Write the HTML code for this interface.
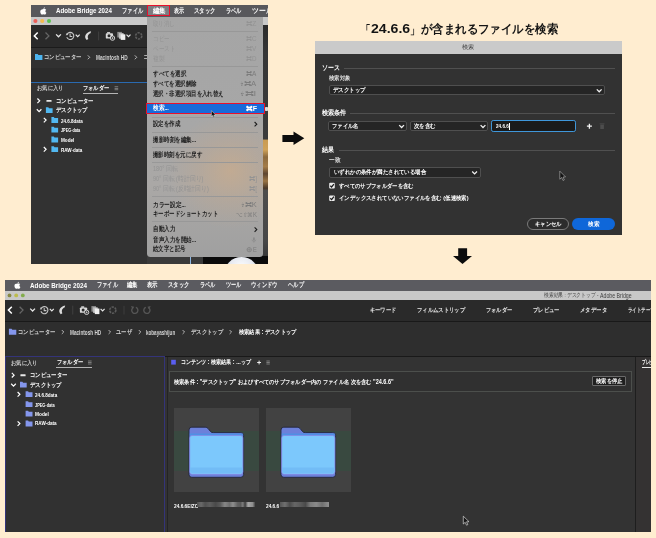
<!DOCTYPE html>
<html lang="ja">
<head>
<meta charset="utf-8">
<title>Adobe Bridge 検索</title>
<style>
html,body{margin:0;padding:0;overflow:hidden}
body{width:656px;height:538px;background:#ffedd0;position:relative;overflow:hidden;font-family:"Liberation Sans",sans-serif;}
.a{position:absolute}
.t{position:absolute;white-space:nowrap;transform-origin:0 50%}
.clip{position:absolute;left:0;top:0;width:656px;height:538px;overflow:hidden}
#p1{clip-path:inset(5px 388px 274px 31px)}
#dlg{clip-path:inset(41px 34px 303px 315px)}
#p3{clip-path:inset(280px 5px 6px 5px)}
svg{position:absolute;left:0;top:0;overflow:visible}
</style>
</head>
<body>
<!-- heading -->
<div class="t" style="left:360.8px;top:29.2px;font-size:11.6px;line-height:15.08px;height:15.08px;margin-top:-7.54px;color:#141414;font-weight:bold;transform:scaleX(0.792);">「</div><div class="t" style="left:371px;top:28.7px;font-size:12.4px;line-height:16.12px;height:16.12px;margin-top:-8.06px;color:#141414;font-weight:bold;transform:scaleX(1.138);">24.6.6</div><div class="t" style="left:410px;top:29.2px;font-size:11.6px;line-height:15.08px;height:15.08px;margin-top:-7.54px;color:#141414;font-weight:bold;transform:scaleX(0.800);">」</div><div class="t" style="left:421px;top:29.2px;font-size:11.8px;line-height:15.34px;height:15.34px;margin-top:-7.67px;color:#141414;font-weight:bold;transform:scaleX(0.951);">が含まれるファイルを検索</div>
<svg width="656" height="538" viewBox="0 0 656 538">
  <path d="M282.4 134.9H293.5V131.6L304.3 138.3L293.5 145V141.9H282.4Z" fill="#0c0c0c"/>
  <path d="M458.2 248.2H467.1V256H472L462.5 264L453 256H458.2Z" fill="#0c0c0c"/>
</svg>
<!-- PANEL 1 : Bridge window with 編集 menu open -->
<div class="clip" id="p1">

  <div class="a" style="left:31px;top:5px;width:237px;height:12px;background:#58585c"></div>
  <div class="a" style="left:31px;top:16.6px;width:237px;height:8.8px;background:#c9c9c9"></div>
  <div class="a" style="left:31px;top:25.2px;width:237px;height:22px;background:#2a2a2a"></div>
  <div class="a" style="left:31px;top:46.6px;width:237px;height:22px;background:#313131;border-top:1px solid #1b1b1b;box-sizing:border-box"></div>
  <div class="a" style="left:31px;top:68px;width:237px;height:15px;background:#2c2c2c"></div>
  <div class="a" style="left:31px;top:83px;width:237px;height:181px;background:#323232"></div>
  <div class="a" style="left:31px;top:82.3px;width:237px;height:1px;background:#2a6ab0"></div>
  <!-- photo sliver right of the menu -->
  <div class="a" style="left:262px;top:25px;width:6px;height:240px;background:linear-gradient(180deg,#2b2b2b 0,#363636 12%,#3b3b3b 47.4%,#c99b52 48.1%,#cfa259 52%,#8c6a3e 55%,#a47c48 59%,#5e4630 62%,#9a7444 65%,#4a3828 68%,#4c4c4c 69%,#474747 90%,#3a3a3a 96%,#0b0b0b 96.8%)"></div>
  <div class="a" style="left:265.4px;top:106.6px;width:3px;height:4.2px;border-radius:0.8px;background:#d9d9d9"></div>
  <div class="a" style="left:147px;top:256px;width:56px;height:8px;background:#3a3a3a"></div>
  <div class="a" style="left:190px;top:256px;width:0.9px;height:8px;background:#8db6e2"></div>
  <div class="a" style="left:203px;top:256px;width:65px;height:8px;background:#0b0b0b"></div>
  <div class="a" style="left:224px;top:257.2px;width:35px;height:35px;border-radius:50%;background:radial-gradient(circle at 50% 30%,#fbfcfe 0,#e6e9f0 40%,#c2c8d6 70%,#8a92a4 100%)"></div>

  <div class="t" style="left:55.9px;top:11.7px;font-size:6.9px;line-height:8.97px;height:8.97px;margin-top:-4.485px;color:#fff;font-weight:bold;transform:scaleX(0.896);">Adobe Bridge 2024</div>
  <div class="t" style="left:122.4px;top:10.8px;font-size:6.6px;line-height:8.58px;height:8.58px;margin-top:-4.29px;color:#fff;font-weight:bold;transform:scaleX(0.750);">ファイル</div>
  <div class="a" style="left:147.4px;top:4.9px;width:22.4px;height:11.5px;box-sizing:border-box;border:1.1px solid #e8102c;background:#7c7c80"></div>
  <div class="t" style="left:152.6px;top:10.8px;font-size:6.6px;line-height:8.58px;height:8.58px;margin-top:-4.29px;color:#fff;font-weight:bold;transform:scaleX(0.914);">編集</div>
  <div class="t" style="left:174.2px;top:10.8px;font-size:6.6px;line-height:8.58px;height:8.58px;margin-top:-4.29px;color:#fff;font-weight:bold;transform:scaleX(0.721);">表示</div>
  <div class="t" style="left:193.8px;top:10.8px;font-size:6.6px;line-height:8.58px;height:8.58px;margin-top:-4.29px;color:#fff;font-weight:bold;transform:scaleX(0.768);">スタック</div>
  <div class="t" style="left:226px;top:10.8px;font-size:6.6px;line-height:8.58px;height:8.58px;margin-top:-4.29px;color:#fff;font-weight:bold;transform:scaleX(0.743);">ラベル</div>
  <div class="t" style="left:251.5px;top:10.8px;font-size:6.6px;line-height:8.58px;height:8.58px;margin-top:-4.29px;color:#fff;font-weight:bold;transform:scaleX(0.976);">ツール</div>
  <div class="t" style="left:44.4px;top:57.3px;font-size:6.4px;line-height:8.32px;height:8.32px;margin-top:-4.16px;color:#d2d2d2;font-weight:bold;transform:scaleX(0.895);">コンピューター</div>
  <div class="t" style="left:96.4px;top:58.2px;font-size:6.3px;line-height:8.19px;height:8.19px;margin-top:-4.095px;color:#d2d2d2;font-weight:bold;transform:scaleX(0.753);">Macintosh HD</div>
  <div class="t" style="left:143px;top:57.3px;font-size:6.4px;line-height:8.32px;height:8.32px;margin-top:-4.16px;color:#d2d2d2;font-weight:bold;transform:scaleX(1.417);">コン</div>
  <div class="t" style="left:37px;top:88.4px;font-size:6.2px;line-height:8.06px;height:8.06px;margin-top:-4.03px;color:#cdcdcd;font-weight:bold;transform:scaleX(0.880);">お気に入り</div>
  <div class="t" style="left:83.4px;top:88.4px;font-size:6.4px;line-height:8.32px;height:8.32px;margin-top:-4.16px;color:#ffffff;font-weight:bold;transform:scaleX(0.873);">フォルダー</div>
  <div class="a" style="left:82.8px;top:92.7px;width:35px;height:0.9px;background:#b4b4b4"></div>
  <div class="t" style="left:55.6px;top:100.8px;font-size:6.4px;line-height:8.32px;height:8.32px;margin-top:-4.16px;color:#fff;font-weight:bold;transform:scaleX(0.898);">コンピューター</div>
  <div class="t" style="left:55.6px;top:110.2px;font-size:6.4px;line-height:8.32px;height:8.32px;margin-top:-4.16px;color:#fff;font-weight:bold;transform:scaleX(0.881);">デスクトップ</div>
  <div class="t" style="left:61px;top:121px;font-size:6.1px;line-height:7.93px;height:7.93px;margin-top:-3.965px;color:#fff;font-weight:bold;transform:scaleX(0.736);">24.6.8data</div>
  <div class="t" style="left:61px;top:130.1px;font-size:6.1px;line-height:7.93px;height:7.93px;margin-top:-3.965px;color:#fff;font-weight:bold;transform:scaleX(0.623);">JPEG-data</div>
  <div class="t" style="left:61px;top:139.9px;font-size:6.1px;line-height:7.93px;height:7.93px;margin-top:-3.965px;color:#fff;font-weight:bold;transform:scaleX(0.761);">Model</div>
  <div class="t" style="left:61px;top:150.2px;font-size:6.1px;line-height:7.93px;height:7.93px;margin-top:-3.965px;color:#fff;font-weight:bold;transform:scaleX(0.747);">RAW-data</div>
  <svg width="656" height="538" viewBox="0 0 656 538">
<g transform="translate(43.4 10.9) scale(0.95)" fill="#fff"><path d="M0.2 -1.9C-0.6 -1.9 -1.0 -1.5 -1.6 -1.5C-2.6 -1.5 -3.3 -0.5 -3.3 0.8C-3.3 2.2 -2.3 3.9 -1.4 3.9C-0.9 3.9 -0.6 3.6 0 3.6C0.6 3.6 0.8 3.9 1.4 3.9C2.2 3.9 2.9 2.7 3.2 1.9C2.4 1.6 2.1 0.9 2.1 0.3C2.1 -0.4 2.5 -0.9 3.0 -1.2C2.6 -1.7 2.0 -1.9 1.5 -1.9C0.9 -1.9 0.6 -1.9 0.2 -1.9Z"/><path d="M0.1 -2.1C0.1 -3.0 0.8 -3.7 1.6 -3.8C1.7 -2.9 0.9 -2.1 0.1 -2.1Z"/></g>
<circle cx="35.4" cy="21" r="2.05" fill="#ec5f58"/>
<circle cx="42.2" cy="21" r="2.05" fill="#f4bc4e"/>
<circle cx="49" cy="21" r="2.05" fill="#5cc351"/>
<path d="M37.7 32.5L34.3 35.9L37.7 39.3" fill="none" stroke="#fff" stroke-width="1.5"/><path d="M45.5 32.5L48.9 35.9L45.5 39.3" fill="none" stroke="#666666" stroke-width="1.3"/><path d="M56.1 34.4L58.5 36.8L60.9 34.4" fill="none" stroke="#e6e6e6" stroke-width="1.3"/><path d="M67.1 34.1A3.6 3.6 0 1 1 66.8 37.1" fill="none" stroke="#c4c4c4" stroke-width="1.15"/><path d="M65.7 35.3l1.1 -2.4l1.5 2.2z" fill="#c4c4c4"/><path d="M70.1 33.5V36.4H72.3" fill="none" stroke="#c4c4c4" stroke-width="1.05"/><path d="M75.7 34.6L77.7 36.6L79.7 34.6" fill="none" stroke="#e6e6e6" stroke-width="1.2"/><path d="M91.1 31.3C85.5 32.5 83.5 37.1 86.7 40.1L88.3 39.1C87.1 36.5 88.1 34.1 90.5 33.3Z" fill="#dcdcdc"/><rect x="98.3" y="31.5" width="0.8" height="8.8" fill="#474747"/><rect x="105.8" y="33.2" width="7.2" height="5.4" rx="0.9" fill="#d8d8d8"/><rect x="107.1" y="32.1" width="3" height="1.5" fill="#d8d8d8"/><circle cx="109" cy="35.8" r="1.5" fill="#2a2a2a"/><circle cx="112.5" cy="38.1" r="2.2" fill="#2a2a2a" stroke="#d8d8d8" stroke-width="0.95"/><path d="M112.5 37.1v2M111.5 38.1h2" stroke="#d8d8d8" stroke-width="0.7"/><rect x="117.3" y="31.9" width="4.6" height="5.6" fill="#8e8e8e"/><rect x="119" y="33.1" width="4.6" height="5.6" fill="#c0c0c0"/><rect x="120.7" y="34.3" width="4.6" height="5.6" fill="#f0f0f0"/><path d="M126.5 34.6L128.5 36.6L130.5 34.6" fill="none" stroke="#e6e6e6" stroke-width="1.2"/><circle cx="138.7" cy="35.9" r="3.1" fill="none" stroke="#5c5c5c" stroke-width="1.6" stroke-dasharray="2.3 0.95"/>
<path d="M35 54.1h2.664l0.74 0.96h3.996v5.04h-7.4z" fill="#4db4ee"/>
<path d="M87.8 55.35L89.75 57.3L87.8 59.25" fill="none" stroke="#bebebe" stroke-width="0.95"/>
<path d="M134.8 55.35L136.75 57.3L134.8 59.25" fill="none" stroke="#bebebe" stroke-width="0.95"/>
<rect x="114.6" y="86.45" width="3.6" height="0.7" fill="#9a9a9a"/>
<rect x="114.6" y="87.95" width="3.6" height="0.7" fill="#9a9a9a"/>
<rect x="114.6" y="89.45" width="3.6" height="0.7" fill="#9a9a9a"/>
<path d="M37.4 98.5L39.7 100.8L37.4 103.1" fill="none" stroke="#fff" stroke-width="1.2"/>
<rect x="46.4" y="99.9" width="5.2" height="1.9" rx="0.5" fill="#e8e8e8"/>
<path d="M36.8 109.25L39.1 111.55L41.4 109.25" fill="none" stroke="#fff" stroke-width="1.2"/>
<path d="M45.9 107.2h2.412l0.67 0.928h3.618v4.872h-6.7z" fill="#52b8f0"/>
<path d="M43.8 117.8L46.1 120.1L43.8 122.4" fill="none" stroke="#fff" stroke-width="1.2"/>
<path d="M51.4 117.1h2.412l0.67 0.928h3.618v4.872h-6.7z" fill="#52b8f0"/>
<path d="M51.4 126.8h2.412l0.67 0.928h3.618v4.872h-6.7z" fill="#52b8f0"/>
<path d="M51.4 136.6h2.412l0.67 0.928h3.618v4.872h-6.7z" fill="#52b8f0"/>
<path d="M43.8 147L46.1 149.3L43.8 151.6" fill="none" stroke="#fff" stroke-width="1.2"/>
<path d="M51.4 146.3h2.412l0.67 0.928h3.618v4.872h-6.7z" fill="#52b8f0"/>
  </svg>
  <div class="a" style="left:147.4px;top:16.8px;width:115.5px;height:239.9px;border-radius:0 0 3.5px 3.5px;background:
     radial-gradient(ellipse 62px 58px at 72% 64%,rgba(208,172,134,.62) 0,rgba(196,168,140,.36) 50%,rgba(170,165,160,0) 100%),
     linear-gradient(180deg,#a5a5a5 0,#a7a7a7 45%,#aaa8a6 70%,#a0a0a0 100%)"></div>
  <div class="t" style="left:152.8px;top:24.3px;font-size:6.5px;line-height:8.45px;height:8.45px;margin-top:-4.225px;color:#939393;transform:scaleX(0.779);">取り消し</div>
  <div class="t" style="left:246.2px;top:24.3px;font-size:6.3px;line-height:8.19px;height:8.19px;margin-top:-4.095px;color:#939393;transform:scaleX(1.055);">⌘Z</div>
  <div class="a" style="left:152px;top:30.9px;width:106px;height:0.8px;background:#989898"></div>
  <div class="t" style="left:152.8px;top:38.8px;font-size:6.5px;line-height:8.45px;height:8.45px;margin-top:-4.225px;color:#939393;transform:scaleX(0.790);">コピー</div>
  <div class="t" style="left:246.2px;top:38.8px;font-size:6.3px;line-height:8.19px;height:8.19px;margin-top:-4.095px;color:#939393;transform:scaleX(0.985);">⌘C</div>
  <div class="t" style="left:152.8px;top:48.9px;font-size:6.5px;line-height:8.45px;height:8.45px;margin-top:-4.225px;color:#939393;transform:scaleX(0.786);">ペースト</div>
  <div class="t" style="left:246.2px;top:48.9px;font-size:6.3px;line-height:8.19px;height:8.19px;margin-top:-4.095px;color:#939393;transform:scaleX(1.019);">⌘V</div>
  <div class="t" style="left:152.8px;top:59.1px;font-size:6.5px;line-height:8.45px;height:8.45px;margin-top:-4.225px;color:#939393;transform:scaleX(0.843);">複製</div>
  <div class="t" style="left:246.2px;top:59.1px;font-size:6.3px;line-height:8.19px;height:8.19px;margin-top:-4.095px;color:#939393;transform:scaleX(0.985);">⌘D</div>
  <div class="a" style="left:152px;top:66px;width:106px;height:0.8px;background:#989898"></div>
  <div class="t" style="left:152.8px;top:74.2px;font-size:6.5px;line-height:8.45px;height:8.45px;margin-top:-4.225px;color:#1c1c1c;font-weight:bold;transform:scaleX(0.790);">すべてを選択</div>
  <div class="t" style="left:246.2px;top:74.2px;font-size:6.3px;line-height:8.19px;height:8.19px;margin-top:-4.095px;color:#7c7c7c;transform:scaleX(1.019);">⌘A</div>
  <div class="t" style="left:152.8px;top:84px;font-size:6.5px;line-height:8.45px;height:8.45px;margin-top:-4.225px;color:#1c1c1c;font-weight:bold;transform:scaleX(0.782);">すべてを選択解除</div>
  <div class="t" style="left:240.4px;top:84px;font-size:6.3px;line-height:8.19px;height:8.19px;margin-top:-4.095px;color:#7c7c7c;transform:scaleX(1.227);">⇧⌘A</div>
  <div class="t" style="left:152.8px;top:94px;font-size:6.5px;line-height:8.45px;height:8.45px;margin-top:-4.225px;color:#1c1c1c;font-weight:bold;transform:scaleX(0.778);">選択・非選択項目を入れ替え</div>
  <div class="t" style="left:240.4px;top:94px;font-size:6.3px;line-height:8.19px;height:8.19px;margin-top:-4.095px;color:#7c7c7c;transform:scaleX(1.507);">⇧⌘I</div>
  <div class="a" style="left:145.5px;top:103.4px;width:119.2px;height:10.6px;box-sizing:border-box;border:1.25px solid #e8102c;background:#176bda"></div>
  <div class="t" style="left:152.8px;top:108.7px;font-size:6.5px;line-height:8.45px;height:8.45px;margin-top:-4.225px;color:#fff;font-weight:bold;transform:scaleX(0.814);">検索...</div>
  <div class="t" style="left:246.4px;top:108.7px;font-size:6.4px;line-height:8.32px;height:8.32px;margin-top:-4.16px;color:#fff;font-weight:bold;transform:scaleX(1.110);">⌘F</div>
  <div class="a" style="left:152px;top:116.8px;width:106px;height:0.8px;background:#989898"></div>
  <div class="t" style="left:152.8px;top:124.2px;font-size:6.5px;line-height:8.45px;height:8.45px;margin-top:-4.225px;color:#1c1c1c;font-weight:bold;transform:scaleX(0.777);">設定を作成</div>
  <div class="a" style="left:152px;top:131.5px;width:106px;height:0.8px;background:#989898"></div>
  <div class="t" style="left:152.8px;top:139.8px;font-size:6.5px;line-height:8.45px;height:8.45px;margin-top:-4.225px;color:#1c1c1c;font-weight:bold;transform:scaleX(0.794);">撮影時刻を編集...</div>
  <div class="a" style="left:152px;top:146.5px;width:106px;height:0.8px;background:#989898"></div>
  <div class="t" style="left:152.8px;top:154.8px;font-size:6.5px;line-height:8.45px;height:8.45px;margin-top:-4.225px;color:#1c1c1c;font-weight:bold;transform:scaleX(0.781);">撮影時刻を元に戻す</div>
  <div class="a" style="left:152px;top:161.8px;width:106px;height:0.8px;background:#989898"></div>
  <div class="t" style="left:152.8px;top:169.6px;font-size:6.5px;line-height:8.45px;height:8.45px;margin-top:-4.225px;color:#939393;transform:scaleX(0.861);">180° 回転</div>
  <div class="t" style="left:152.8px;top:179.2px;font-size:6.5px;line-height:8.45px;height:8.45px;margin-top:-4.225px;color:#939393;transform:scaleX(0.840);">90° 回転 (時計回り)</div>
  <div class="t" style="left:248.5px;top:179.2px;font-size:6.3px;line-height:8.19px;height:8.19px;margin-top:-4.095px;color:#939393;transform:scaleX(1.045);">⌘]</div>
  <div class="t" style="left:152.8px;top:189.4px;font-size:6.5px;line-height:8.45px;height:8.45px;margin-top:-4.225px;color:#939393;transform:scaleX(0.836);">90° 回転 (反時計回り)</div>
  <div class="t" style="left:248.5px;top:189.4px;font-size:6.3px;line-height:8.19px;height:8.19px;margin-top:-4.095px;color:#939393;transform:scaleX(1.045);">⌘[</div>
  <div class="a" style="left:152px;top:196.4px;width:106px;height:0.8px;background:#989898"></div>
  <div class="t" style="left:152.8px;top:205px;font-size:6.5px;line-height:8.45px;height:8.45px;margin-top:-4.225px;color:#1c1c1c;font-weight:bold;transform:scaleX(0.811);">カラー設定...</div>
  <div class="t" style="left:241px;top:205px;font-size:6.3px;line-height:8.19px;height:8.19px;margin-top:-4.095px;color:#7c7c7c;transform:scaleX(1.182);">⇧⌘K</div>
  <div class="t" style="left:152.8px;top:214.6px;font-size:6.5px;line-height:8.45px;height:8.45px;margin-top:-4.225px;color:#1c1c1c;font-weight:bold;transform:scaleX(0.776);">キーボードショートカット</div>
  <div class="t" style="left:235.6px;top:214.6px;font-size:6.3px;line-height:8.19px;height:8.19px;margin-top:-4.095px;color:#7c7c7c;transform:scaleX(0.946);">⌥⇧⌘K</div>
  <div class="a" style="left:152px;top:221.4px;width:106px;height:0.8px;background:#989898"></div>
  <div class="t" style="left:152.8px;top:229.6px;font-size:6.5px;line-height:8.45px;height:8.45px;margin-top:-4.225px;color:#1c1c1c;font-weight:bold;transform:scaleX(0.793);">自動入力</div>
  <div class="t" style="left:152.8px;top:239.8px;font-size:6.5px;line-height:8.45px;height:8.45px;margin-top:-4.225px;color:#1c1c1c;font-weight:bold;transform:scaleX(0.794);">音声入力を開始...</div>
  <div class="t" style="left:152.8px;top:249.6px;font-size:6.5px;line-height:8.45px;height:8.45px;margin-top:-4.225px;color:#1c1c1c;font-weight:bold;transform:scaleX(0.776);">絵文字と記号</div>
  <div class="t" style="left:252.8px;top:250.5px;font-size:6.3px;line-height:8.19px;height:8.19px;margin-top:-4.095px;color:#7c7c7c;transform:scaleX(0.904);">E</div>
  <svg width="656" height="538" viewBox="0 0 656 538">
<path d="M254.6 122L256.8 124.2L254.6 126.4" fill="none" stroke="#1c1c1c" stroke-width="1.1"/>
<path d="M254.6 227.4L256.8 229.6L254.6 231.8" fill="none" stroke="#1c1c1c" stroke-width="1.1"/>
<rect x="253" y="237.2" width="1.8" height="3.4" rx="0.9" fill="#8a8a8a"/><path d="M252 239.6a1.9 1.9 0 0 0 3.8 0M253.9 241.5v1.2" fill="none" stroke="#8a8a8a" stroke-width="0.6"/>
<circle cx="249.2" cy="249.7" r="2.2" fill="none" stroke="#7c7c7c" stroke-width="0.7"/><path d="M247 249.7h4.4M249.2 247.5v4.4" stroke="#7c7c7c" stroke-width="0.5"/>
<path d="M211.4 110.6L211.4 116.6L212.8 115.4L213.8 117.7L214.8 117.3L213.8 115.1L215.8 115Z" fill="#111" stroke="#e8e8e8" stroke-width="0.45"/>
  </svg>
</div>
<!-- DIALOG : 検索 -->
<div class="clip" id="dlg">

  <div class="a" style="left:315px;top:41px;width:307px;height:13px;background:#cacaca"></div>
  <div class="a" style="left:315px;top:53.9px;width:307px;height:182px;background:#323232"></div>

  <div class="t" style="left:462.4px;top:47.7px;font-size:5.8px;line-height:7.54px;height:7.54px;margin-top:-3.77px;color:#3c3c3c;transform:scaleX(1.017);">検索</div>
  <div class="t" style="left:321.9px;top:68.1px;font-size:7.2px;line-height:9.36px;height:9.36px;margin-top:-4.68px;color:#fff;font-weight:bold;transform:scaleX(0.848);">ソース</div>
  <div class="a" style="left:343.6px;top:68.15px;width:271.8px;height:0.9px;background:#505050"></div>
  <div class="t" style="left:329.4px;top:78.6px;font-size:5.6px;line-height:7.28px;height:7.28px;margin-top:-3.64px;color:#e2e2e2;font-weight:bold;transform:scaleX(0.888);">検索対象</div>
  <div class="a" style="left:328.8px;top:85.3px;width:276.4px;height:10.2px;box-sizing:border-box;border:0.9px solid #4f4f4f;border-radius:2px;background:#252525"></div>
  <div class="t" style="left:333.4px;top:90.5px;font-size:6.2px;line-height:8.06px;height:8.06px;margin-top:-4.03px;color:#fff;font-weight:bold;transform:scaleX(0.903);">デスクトップ</div>
  <div class="t" style="left:321.9px;top:112.3px;font-size:7px;line-height:9.1px;height:9.1px;margin-top:-4.55px;color:#fff;font-weight:bold;transform:scaleX(0.875);">検索条件</div>
  <div class="a" style="left:350.4px;top:112.65px;width:265px;height:0.9px;background:#505050"></div>
  <div class="a" style="left:328.4px;top:121px;width:79px;height:10.2px;box-sizing:border-box;border:0.9px solid #4f4f4f;border-radius:2px;background:#252525"></div>
  <div class="t" style="left:332px;top:126.2px;font-size:6.2px;line-height:8.06px;height:8.06px;margin-top:-4.03px;color:#fff;font-weight:bold;transform:scaleX(0.880);">ファイル名</div>
  <div class="a" style="left:410.4px;top:121px;width:77.4px;height:10.2px;box-sizing:border-box;border:0.9px solid #4f4f4f;border-radius:2px;background:#252525"></div>
  <div class="t" style="left:413.8px;top:126.2px;font-size:6.2px;line-height:8.06px;height:8.06px;margin-top:-4.03px;color:#fff;font-weight:bold;transform:scaleX(0.900);">次を含む</div>
  <div class="a" style="left:490.6px;top:119.9px;width:85.2px;height:12.3px;box-sizing:border-box;border:1.3px solid #3f97da;border-radius:2.2px;background:#1a1a1a"></div>
  <div class="t" style="left:495.6px;top:127.1px;font-size:5.8px;line-height:7.54px;height:7.54px;margin-top:-3.77px;color:#fff;font-weight:bold;transform:scaleX(0.794);">24.6.6</div>
  <div class="a" style="left:508.9px;top:122.6px;width:0.9px;height:7px;background:#fff"></div>
  <div class="t" style="left:321.9px;top:150px;font-size:7px;line-height:9.1px;height:9.1px;margin-top:-4.55px;color:#fff;font-weight:bold;transform:scaleX(0.857);">結果</div>
  <div class="a" style="left:338.8px;top:149.85px;width:276.6px;height:0.9px;background:#505050"></div>
  <div class="t" style="left:329.4px;top:160.7px;font-size:5.6px;line-height:7.28px;height:7.28px;margin-top:-3.64px;color:#e2e2e2;font-weight:bold;transform:scaleX(0.933);">一致</div>
  <div class="a" style="left:328.8px;top:167.4px;width:152.6px;height:10.2px;box-sizing:border-box;border:0.9px solid #4f4f4f;border-radius:2px;background:#252525"></div>
  <div class="t" style="left:333.8px;top:171.9px;font-size:6.2px;line-height:8.06px;height:8.06px;margin-top:-4.03px;color:#fff;font-weight:bold;transform:scaleX(0.902);">いずれかの条件が満たされている場合</div>
  <div class="t" style="left:339.2px;top:185.7px;font-size:6.2px;line-height:8.06px;height:8.06px;margin-top:-4.03px;color:#fff;font-weight:bold;transform:scaleX(0.888);">すべてのサブフォルダーを含む</div>
  <div class="t" style="left:339.2px;top:198.3px;font-size:6.2px;line-height:8.06px;height:8.06px;margin-top:-4.03px;color:#fff;font-weight:bold;transform:scaleX(0.901);">インデックスされていないファイルを含む (低速検索)</div>
  <div class="a" style="left:527.4px;top:217.9px;width:41.5px;height:12.2px;box-sizing:border-box;border:1px solid #7a7a7a;border-radius:6.1px;background:#2c2c2c"></div>
  <div class="t" style="left:535px;top:224.1px;font-size:6.1px;line-height:7.93px;height:7.93px;margin-top:-3.965px;color:#fff;font-weight:bold;transform:scaleX(0.880);">キャンセル</div>
  <div class="a" style="left:572.4px;top:217.9px;width:42.8px;height:12.2px;border-radius:6.1px;background:#0f67d9"></div>
  <div class="t" style="left:588.2px;top:224.1px;font-size:6.1px;line-height:7.93px;height:7.93px;margin-top:-3.965px;color:#fff;font-weight:bold;transform:scaleX(0.933);">検索</div>
  <svg width="656" height="538" viewBox="0 0 656 538">
<path d="M596.8 89.4L599.2 91.8L601.6 89.4" fill="none" stroke="#f0f0f0" stroke-width="1.3"/>
<path d="M399.2 125.1L401.6 127.5L404 125.1" fill="none" stroke="#f0f0f0" stroke-width="1.3"/>
<path d="M480.6 125.1L483 127.5L485.4 125.1" fill="none" stroke="#f0f0f0" stroke-width="1.3"/>
<path d="M472.2 171.5L474.6 173.9L477 171.5" fill="none" stroke="#f0f0f0" stroke-width="1.3"/>
<path d="M586.9 126.2H591.9M589.4 123.7V128.7" stroke="#f4f4f4" stroke-width="1.3" fill="none"/>
<rect x="600.3" y="124.6" width="3.6" height="4.4" fill="#4d4d4d"/><rect x="599.7" y="123.4" width="4.8" height="0.9" fill="#4d4d4d"/>
<rect x="329.2" y="182.8" width="5.6" height="5.6" rx="0.9" fill="#ececec"/>
<path d="M330.3 185.7L331.6 187L333.9 184.1" fill="none" stroke="#1a1a1a" stroke-width="1.25"/>
<rect x="329.2" y="195.4" width="5.6" height="5.6" rx="0.9" fill="#ececec"/>
<path d="M330.3 198.3L331.6 199.6L333.9 196.7" fill="none" stroke="#1a1a1a" stroke-width="1.25"/>
<path d="M559.8 171.2L559.8 179.2L561.7 177.5L563 180.5L564.3 179.9L563 177L565.5 176.9Z" fill="#141414" stroke="#d4d4d4" stroke-width="0.5"/>
  </svg>
</div>
<!-- PANEL 3 : search results window -->
<div class="clip" id="p3">

  <div class="a" style="left:5px;top:280px;width:646px;height:11px;background:#5b5b60"></div>
  <div class="a" style="left:5px;top:290.5px;width:646px;height:10px;background:#c8c8c8"></div>
  <div class="a" style="left:5px;top:300.2px;width:646px;height:21.4px;background:#2a2a2a"></div>
  <div class="a" style="left:5px;top:320.8px;width:646px;height:36px;background:#2e2e2e;border-top:1.1px solid #191919;box-sizing:border-box"></div>
  <div class="a" style="left:5px;top:355.6px;width:646px;height:178px;background:#333333;border-top:1.1px solid #191919;box-sizing:border-box"></div>
  <!-- left panel frame -->
  <div class="a" style="left:5.3px;top:356.2px;width:159.6px;height:176.4px;box-sizing:border-box;border:1px solid #34347a;border-bottom:none;background:#313131"></div>
  <!-- content panel -->
  <div class="a" style="left:166.6px;top:356.6px;width:469.6px;height:176px;box-sizing:border-box;border-left:1px solid #242424;border-right:1.2px solid #1e1e1e;background:#333333"></div>
  <!-- criteria box -->
  <div class="a" style="left:168.8px;top:371.2px;width:462.8px;height:20.6px;box-sizing:border-box;border:0.9px solid #4c4f4c;background:#303030"></div>
  <div class="a" style="left:591.5px;top:376.2px;width:34.4px;height:10.2px;box-sizing:border-box;border:0.9px solid #6a6a6a;border-radius:1px;background:#1f1f1f"></div>
  <!-- thumbnails -->
  <div class="a" style="left:174px;top:407.7px;width:85px;height:84.3px;background:#424242"></div>
  <div class="a" style="left:266px;top:407.7px;width:85.4px;height:84.3px;background:#424242"></div>
  <div class="a" style="left:174px;top:431px;width:85px;height:40.4px;background:rgba(40,90,62,.32)"></div>
  <div class="a" style="left:266px;top:431px;width:85.4px;height:40.4px;background:rgba(40,90,62,.32)"></div>
  <!-- preview panel -->
  <div class="a" style="left:636.4px;top:356.6px;width:15px;height:176px;background:#343232"></div>
  <div class="a" style="left:642px;top:366.6px;width:10px;height:0.9px;background:#e8e8e8"></div>

  <div class="t" style="left:29.7px;top:286.1px;font-size:6.9px;line-height:8.97px;height:8.97px;margin-top:-4.485px;color:#fff;font-weight:bold;transform:scaleX(0.912);">Adobe Bridge 2024</div>
  <div class="t" style="left:96.6px;top:285.2px;font-size:6.5px;line-height:8.45px;height:8.45px;margin-top:-4.225px;color:#fff;font-weight:bold;transform:scaleX(0.743);">ファイル</div>
  <div class="t" style="left:127.2px;top:285.2px;font-size:6.5px;line-height:8.45px;height:8.45px;margin-top:-4.225px;color:#fff;font-weight:bold;transform:scaleX(0.757);">編集</div>
  <div class="t" style="left:147.2px;top:285.2px;font-size:6.5px;line-height:8.45px;height:8.45px;margin-top:-4.225px;color:#fff;font-weight:bold;transform:scaleX(0.771);">表示</div>
  <div class="t" style="left:168.2px;top:285.2px;font-size:6.5px;line-height:8.45px;height:8.45px;margin-top:-4.225px;color:#fff;font-weight:bold;transform:scaleX(0.764);">スタック</div>
  <div class="t" style="left:200px;top:285.2px;font-size:6.5px;line-height:8.45px;height:8.45px;margin-top:-4.225px;color:#fff;font-weight:bold;transform:scaleX(0.743);">ラベル</div>
  <div class="t" style="left:225.8px;top:285.2px;font-size:6.5px;line-height:8.45px;height:8.45px;margin-top:-4.225px;color:#fff;font-weight:bold;transform:scaleX(0.733);">ツール</div>
  <div class="t" style="left:251.2px;top:285.2px;font-size:6.5px;line-height:8.45px;height:8.45px;margin-top:-4.225px;color:#fff;font-weight:bold;transform:scaleX(0.766);">ウィンドウ</div>
  <div class="t" style="left:288px;top:285.2px;font-size:6.5px;line-height:8.45px;height:8.45px;margin-top:-4.225px;color:#fff;font-weight:bold;transform:scaleX(0.752);">ヘルプ</div>
  <div class="t" style="left:544px;top:295.4px;font-size:5.6px;line-height:7.28px;height:7.28px;margin-top:-3.64px;color:#454545;transform:scaleX(0.799);">検索結果 : デスクトップ - </div><div class="t" style="left:600px;top:296.2px;font-size:6.3px;line-height:8.19px;height:8.19px;margin-top:-4.095px;color:#3e3e3e;transform:scaleX(0.828);">Adobe Bridge</div>
  <div class="t" style="left:370px;top:310.2px;font-size:6.1px;line-height:7.93px;height:7.93px;margin-top:-3.965px;color:#e6e6e6;font-weight:bold;transform:scaleX(0.873);">キーワード</div>
  <div class="t" style="left:417px;top:310.2px;font-size:6.1px;line-height:7.93px;height:7.93px;margin-top:-3.965px;color:#e6e6e6;font-weight:bold;transform:scaleX(0.889);">フィルムストリップ</div>
  <div class="t" style="left:486px;top:310.2px;font-size:6.1px;line-height:7.93px;height:7.93px;margin-top:-3.965px;color:#e6e6e6;font-weight:bold;transform:scaleX(0.867);">フォルダー</div>
  <div class="t" style="left:533.2px;top:310.2px;font-size:6.1px;line-height:7.93px;height:7.93px;margin-top:-3.965px;color:#e6e6e6;font-weight:bold;transform:scaleX(0.880);">プレビュー</div>
  <div class="t" style="left:580px;top:310.2px;font-size:6.1px;line-height:7.93px;height:7.93px;margin-top:-3.965px;color:#e6e6e6;font-weight:bold;transform:scaleX(0.900);">メタデータ</div>
  <div class="t" style="left:627.8px;top:310.2px;font-size:6.1px;line-height:7.93px;height:7.93px;margin-top:-3.965px;color:#e6e6e6;font-weight:bold;transform:scaleX(0.743);">ライトテーブル</div>
  <div class="t" style="left:18.3px;top:332px;font-size:6.4px;line-height:8.32px;height:8.32px;margin-top:-4.16px;color:#d4d4d4;font-weight:bold;transform:scaleX(0.886);">コンピューター</div>
  <div class="t" style="left:70.4px;top:332.9px;font-size:6.3px;line-height:8.19px;height:8.19px;margin-top:-4.095px;color:#d4d4d4;font-weight:bold;transform:scaleX(0.743);">Macintosh HD</div>
  <div class="t" style="left:116.4px;top:332px;font-size:6.4px;line-height:8.32px;height:8.32px;margin-top:-4.16px;color:#d4d4d4;font-weight:bold;transform:scaleX(0.878);">ユーザ</div>
  <div class="t" style="left:146.4px;top:332.9px;font-size:6.3px;line-height:8.19px;height:8.19px;margin-top:-4.095px;color:#d4d4d4;font-weight:bold;transform:scaleX(0.725);">kobayashijun</div>
  <div class="t" style="left:190.6px;top:332px;font-size:6.4px;line-height:8.32px;height:8.32px;margin-top:-4.16px;color:#d4d4d4;font-weight:bold;transform:scaleX(0.889);">デスクトップ</div>
  <div class="t" style="left:238.8px;top:332px;font-size:6.4px;line-height:8.32px;height:8.32px;margin-top:-4.16px;color:#ffffff;font-weight:bold;transform:scaleX(0.874);">検索結果 : デスクトップ</div>
  <div class="t" style="left:11.2px;top:362.6px;font-size:6.2px;line-height:8.06px;height:8.06px;margin-top:-4.03px;color:#cdcdcd;font-weight:bold;transform:scaleX(0.880);">お気に入り</div>
  <div class="t" style="left:57px;top:362.6px;font-size:6.4px;line-height:8.32px;height:8.32px;margin-top:-4.16px;color:#fff;font-weight:bold;transform:scaleX(0.873);">フォルダー</div>
  <div class="a" style="left:56.4px;top:366.8px;width:35.4px;height:0.9px;background:#b4b4b4"></div>
  <div class="t" style="left:29.6px;top:375.2px;font-size:6.4px;line-height:8.32px;height:8.32px;margin-top:-4.16px;color:#fff;font-weight:bold;transform:scaleX(0.895);">コンピューター</div>
  <div class="t" style="left:29.6px;top:384.7px;font-size:6.4px;line-height:8.32px;height:8.32px;margin-top:-4.16px;color:#fff;font-weight:bold;transform:scaleX(0.883);">デスクトップ</div>
  <div class="t" style="left:35px;top:395.2px;font-size:6.1px;line-height:7.93px;height:7.93px;margin-top:-3.965px;color:#fff;font-weight:bold;transform:scaleX(0.753);">24.6.8data</div>
  <div class="t" style="left:35px;top:404.6px;font-size:6.1px;line-height:7.93px;height:7.93px;margin-top:-3.965px;color:#fff;font-weight:bold;transform:scaleX(0.636);">JPEG-data</div>
  <div class="t" style="left:35px;top:413.7px;font-size:6.1px;line-height:7.93px;height:7.93px;margin-top:-3.965px;color:#fff;font-weight:bold;transform:scaleX(0.784);">Model</div>
  <div class="t" style="left:35px;top:423.3px;font-size:6.1px;line-height:7.93px;height:7.93px;margin-top:-3.965px;color:#fff;font-weight:bold;transform:scaleX(0.754);">RAW-data</div>
  <div class="t" style="left:180.8px;top:362.4px;font-size:6.4px;line-height:8.32px;height:8.32px;margin-top:-4.16px;color:#fff;font-weight:bold;transform:scaleX(0.844);">コンテンツ : 検索結果 : ...ップ</div>
  <div class="t" style="left:174.2px;top:381.8px;font-size:6.3px;line-height:8.19px;height:8.19px;margin-top:-4.095px;color:#fff;font-weight:bold;transform:scaleX(0.871);">検索条件 : "デスクトップ" およびすべてのサブフォルダー内の ファイル名 次を含む "24.6.6"</div>
  <div class="t" style="left:595.6px;top:381.4px;font-size:5.9px;line-height:7.67px;height:7.67px;margin-top:-3.835px;color:#fff;font-weight:bold;transform:scaleX(0.887);">検索を停止</div>
  <div class="t" style="left:642px;top:362.6px;font-size:6.4px;line-height:8.32px;height:8.32px;margin-top:-4.16px;color:#fff;font-weight:bold;transform:scaleX(0.600);">プレビュー</div>
  <div class="t" style="left:174.2px;top:505.7px;font-size:6.1px;line-height:7.93px;height:7.93px;margin-top:-3.965px;color:#fff;font-weight:bold;transform:scaleX(0.783);">24.6.6EIZO</div>
  <div class="t" style="left:266.2px;top:505.7px;font-size:6.1px;line-height:7.93px;height:7.93px;margin-top:-3.965px;color:#fff;font-weight:bold;transform:scaleX(0.779);">24.6.6</div>
  <div class="a" style="left:197px;top:502.4px;width:58px;height:4.6px;filter:blur(0.6px);background:linear-gradient(90deg,#4e4e4e 0,#6a6a6a 7%,#505050 14%,#5e5e5e 22%,#4a4a4a 32%,#5a5a5a 40%,#868686 48%,#6e6e6e 56%,#8e8e8e 62%,#606060 70%,#5a5a5a 75%,#7c7c7c 79%,#3c3c3c 83%,#a8a8a8 88%,#8e8e8e 96%,#444 100%)"></div>
  <div class="a" style="left:280px;top:502.4px;width:48.6px;height:4.6px;filter:blur(0.6px);background:linear-gradient(90deg,#555 0,#707070 10%,#4c4c4c 20%,#666 30%,#5a5a5a 42%,#4a4a4a 52%,#7c7c7c 62%,#8a8a8a 74%,#707070 86%,#909090 100%)"></div>
  <svg width="656" height="538" viewBox="0 0 656 538">
<g transform="translate(17.5 285.2) scale(0.92)" fill="#fff"><path d="M0.2 -1.9C-0.6 -1.9 -1.0 -1.5 -1.6 -1.5C-2.6 -1.5 -3.3 -0.5 -3.3 0.8C-3.3 2.2 -2.3 3.9 -1.4 3.9C-0.9 3.9 -0.6 3.6 0 3.6C0.6 3.6 0.8 3.9 1.4 3.9C2.2 3.9 2.9 2.7 3.2 1.9C2.4 1.6 2.1 0.9 2.1 0.3C2.1 -0.4 2.5 -0.9 3.0 -1.2C2.6 -1.7 2.0 -1.9 1.5 -1.9C0.9 -1.9 0.6 -1.9 0.2 -1.9Z"/><path d="M0.1 -2.1C0.1 -3.0 0.8 -3.7 1.6 -3.8C1.7 -2.9 0.9 -2.1 0.1 -2.1Z"/></g>
<circle cx="9.5" cy="295.4" r="1.9" fill="#8a8a42"/>
<circle cx="16.2" cy="295.4" r="1.9" fill="#bcbc4c"/>
<circle cx="22.8" cy="295.4" r="1.9" fill="#82ac4c"/>
<path d="M11.8 306.7L8.4 310.1L11.8 313.5" fill="none" stroke="#fff" stroke-width="1.5"/><path d="M19.6 306.7L23 310.1L19.6 313.5" fill="none" stroke="#666666" stroke-width="1.3"/><path d="M30.2 308.6L32.6 311L35 308.6" fill="none" stroke="#e6e6e6" stroke-width="1.3"/><path d="M41.2 308.3A3.6 3.6 0 1 1 40.9 311.3" fill="none" stroke="#c4c4c4" stroke-width="1.15"/><path d="M39.8 309.5l1.1 -2.4l1.5 2.2z" fill="#c4c4c4"/><path d="M44.2 307.7V310.6H46.4" fill="none" stroke="#c4c4c4" stroke-width="1.05"/><path d="M49.8 308.8L51.8 310.8L53.8 308.8" fill="none" stroke="#e6e6e6" stroke-width="1.2"/><path d="M65.2 305.5C59.6 306.7 57.6 311.3 60.8 314.3L62.4 313.3C61.2 310.7 62.2 308.3 64.6 307.5Z" fill="#dcdcdc"/><rect x="72.4" y="305.7" width="0.8" height="8.8" fill="#474747"/><rect x="79.9" y="307.4" width="7.2" height="5.4" rx="0.9" fill="#d8d8d8"/><rect x="81.2" y="306.3" width="3" height="1.5" fill="#d8d8d8"/><circle cx="83.1" cy="310" r="1.5" fill="#2a2a2a"/><circle cx="86.6" cy="312.3" r="2.2" fill="#2a2a2a" stroke="#d8d8d8" stroke-width="0.95"/><path d="M86.6 311.3v2M85.6 312.3h2" stroke="#d8d8d8" stroke-width="0.7"/><rect x="91.4" y="306.1" width="4.6" height="5.6" fill="#8e8e8e"/><rect x="93.1" y="307.3" width="4.6" height="5.6" fill="#c0c0c0"/><rect x="94.8" y="308.5" width="4.6" height="5.6" fill="#f0f0f0"/><path d="M100.6 308.8L102.6 310.8L104.6 308.8" fill="none" stroke="#e6e6e6" stroke-width="1.2"/><circle cx="112.8" cy="310.1" r="3.1" fill="none" stroke="#5c5c5c" stroke-width="1.6" stroke-dasharray="2.3 0.95"/>
<rect x="123.6" y="305.8" width="0.8" height="8.8" fill="#414141"/>
<path d="M135.86 307.39A3.1 3.1 0 1 1 132.81 307.93" fill="none" stroke="#565656" stroke-width="1.35"/><path d="M131.01 305.93l3.20 0.90l-1.60 2.60z" fill="#565656"/>
<path d="M145.84 307.39A3.1 3.1 0 1 0 148.89 307.93" fill="none" stroke="#565656" stroke-width="1.35"/><path d="M150.69 305.93l-3.20 0.90l1.60 2.60z" fill="#565656"/>
<path d="M8.9 328.7h2.664l0.74 0.96h3.996v5.04h-7.4z" fill="#8496ec"/>
<path d="M61.8 330.05L63.75 332L61.8 333.95" fill="none" stroke="#bebebe" stroke-width="0.95"/>
<path d="M108.6 330.05L110.55 332L108.6 333.95" fill="none" stroke="#bebebe" stroke-width="0.95"/>
<path d="M138.8 330.05L140.75 332L138.8 333.95" fill="none" stroke="#bebebe" stroke-width="0.95"/>
<path d="M182.6 330.05L184.55 332L182.6 333.95" fill="none" stroke="#bebebe" stroke-width="0.95"/>
<path d="M229.6 330.05L231.55 332L229.6 333.95" fill="none" stroke="#bebebe" stroke-width="0.95"/>
<rect x="88" y="360.65" width="3.6" height="0.7" fill="#9a9a9a"/>
<rect x="266.4" y="360.65" width="3.4" height="0.7" fill="#9a9a9a"/>
<rect x="88" y="362.15" width="3.6" height="0.7" fill="#9a9a9a"/>
<rect x="266.4" y="362.15" width="3.4" height="0.7" fill="#9a9a9a"/>
<rect x="88" y="363.65" width="3.6" height="0.7" fill="#9a9a9a"/>
<rect x="266.4" y="363.65" width="3.4" height="0.7" fill="#9a9a9a"/>
<path d="M11.8 372.9L14.1 375.2L11.8 377.5" fill="none" stroke="#fff" stroke-width="1.2"/>
<rect x="20.4" y="374.3" width="5.2" height="1.9" rx="0.5" fill="#e8e8e8"/>
<path d="M11.2 383.75L13.5 386.05L15.8 383.75" fill="none" stroke="#fff" stroke-width="1.2"/>
<path d="M20 381.7h2.412l0.67 0.928h3.618v4.872h-6.7z" fill="#8496ec"/>
<path d="M17.6 392L19.9 394.3L17.6 396.6" fill="none" stroke="#fff" stroke-width="1.2"/>
<path d="M25.6 391.3h2.484l0.69 0.928h3.726v4.872h-6.9z" fill="#8496ec"/>
<path d="M25.6 401.3h2.484l0.69 0.928h3.726v4.872h-6.9z" fill="#8496ec"/>
<path d="M25.6 410.7h2.484l0.69 0.928h3.726v4.872h-6.9z" fill="#8496ec"/>
<path d="M25.6 420.6h2.484l0.69 0.928h3.726v4.872h-6.9z" fill="#8496ec"/>
<path d="M17.6 421.3L19.9 423.6L17.6 425.9" fill="none" stroke="#fff" stroke-width="1.2"/>
<rect x="171.2" y="359.8" width="4.6" height="4.8" fill="#5a5ef0"/>
<path d="M257.2 362.5H261M259.1 360.6V364.4" stroke="#f0f0f0" stroke-width="1" fill="none"/>
<path d="M189 430q0 -2.8 2.8 -2.8h13.4q1.8 0 3 1.4l2.2 2.8q1 1.2 2.8 1.2h27.6q2.8 0 2.8 2.8v39.1q0 2.8 -2.8 2.8h-49q-2.8 0 -2.8 -2.8z" fill="#6c80da" stroke="#23263c" stroke-width="0.9"/><path d="M189.8 433.4h53v3h-53z" fill="#4f8fe4"/><path d="M189.7 437.9q0 -2.4 2.4 -2.4h48.4q2.4 0 2.4 2.4v34q0 2.4 -2.4 2.4h-48.4q-2.4 0 -2.4 -2.4z" fill="#7cc8fc" stroke="#8a84e4" stroke-width="0.7"/><path d="M190.1 467.4h52.4v3.6q0 2 -2 2h-48.4q-2 0 -2 -2z" fill="#72bcf6"/>
<path d="M281 430q0 -2.8 2.8 -2.8h13.4q1.8 0 3 1.4l2.2 2.8q1 1.2 2.8 1.2h27.6q2.8 0 2.8 2.8v39.1q0 2.8 -2.8 2.8h-49q-2.8 0 -2.8 -2.8z" fill="#6c80da" stroke="#23263c" stroke-width="0.9"/><path d="M281.8 433.4h53v3h-53z" fill="#4f8fe4"/><path d="M281.7 437.9q0 -2.4 2.4 -2.4h48.4q2.4 0 2.4 2.4v34q0 2.4 -2.4 2.4h-48.4q-2.4 0 -2.4 -2.4z" fill="#7cc8fc" stroke="#8a84e4" stroke-width="0.7"/><path d="M282.1 467.4h52.4v3.6q0 2 -2 2h-48.4q-2 0 -2 -2z" fill="#72bcf6"/>
<path d="M463.3 516.2L463.3 524L465.2 522.3L466.5 525.2L467.8 524.6L466.5 521.8L469 521.7Z" fill="#161616" stroke="#f2f2f2" stroke-width="0.6"/>
  </svg>
</div>
</body>
</html>
